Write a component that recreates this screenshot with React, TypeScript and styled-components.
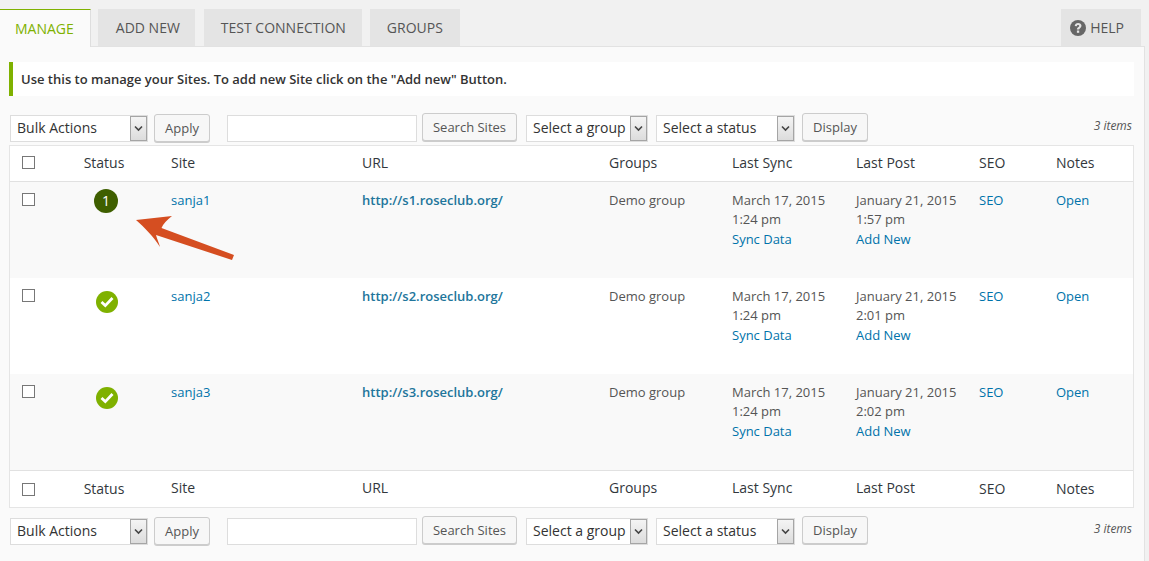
import React from "react";
import styled, { createGlobalStyle } from "styled-components";

const Global = createGlobalStyle`
  html, body { margin: 0; padding: 0; background: #f1f1f1; }
  body { font-family: "Open Sans", "Liberation Sans", sans-serif; font-size: 13px; color: #444; }
  * { box-sizing: border-box; }
`;

const Page = styled.div`
  position: relative;
  width: 1149px;
  height: 561px;
  overflow: hidden;
  padding-top: 9px;
`;

const Tabs = styled.div`
  display: flex;
  gap: 8px;
  height: 37px;
  padding-right: 8px;
  position: relative;
  z-index: 1;
`;

const Tab = styled.div<{ $active?: boolean; $pad?: number }>`
  height: ${(p) => (p.$active ? "38px" : "37px")};
  padding: 0 ${(p) => (p.$active ? "16px" : `${p.$pad ?? 17}px`)} 0 ${(p) => (p.$active ? "15px" : "17px")};
  display: flex;
  align-items: center;
  gap: 4px;
  font-size: 14px;
  text-transform: uppercase;
  background: ${(p) => (p.$active ? "#fafafa" : "#e4e4e4")};
  color: ${(p) => (p.$active ? "#7fb100" : "#555")};
  border-top: ${(p) => (p.$active ? "1px solid #7fb100" : "none")};
  border-right: ${(p) => (p.$active ? "1px solid #dedede" : "none")};
`;

const SecondTab = styled(Tab)`
  margin-left: -1px;
  margin-right: 1px;
  padding: 0 15px 0 18px;
`;

const HelpTab = styled(Tab)`
  margin-left: auto;
  padding: 0 17px 0 9px;
`;

const Panel = styled.div`
  width: 1145px;
  height: 515px;
  background: #fafafa;
  border-top: 1px solid #e2e2e2;
  border-right: 1px solid #e2e2e2;
  padding: 15px 10px 0 9px;
`;

const Notice = styled.div`
  width: 1125px;
  height: 34px;
  background: #fff;
  border-left: 4px solid #7fb100;
  padding-left: 8px;
  display: flex;
  align-items: center;
  font-size: 13px;
  font-weight: 600;
  color: #333;
`;

const Toolbar = styled.div<{ $top?: boolean }>`
  display: flex;
  align-items: flex-start;
  height: 30px;
  margin-top: ${(p) => (p.$top ? "17px" : "8px")};
  padding-left: 1px;
`;

const SelectBox = styled.div<{ $w: number; $gap: number }>`
  width: ${(p) => p.$w}px;
  margin-right: ${(p) => p.$gap}px;
  margin-top: 2px;
  height: 27px;
  background: #fff;
  border: 1px solid #ddd;
  display: flex;
  align-items: center;
  justify-content: space-between;
  padding-left: 6px;
  font-size: 14px;
  color: #333;
`;

const SelectLabel = styled.span`
  margin-bottom: 2px;
`;

const SelectArrow = styled.span`
  width: 17px;
  height: 25px;
  display: flex;
  align-items: center;
  justify-content: center;
  background: linear-gradient(#f4f4f4, #dcdcdc);
  border: 1px solid #a5a5a5;
  color: #444;
`;

const Button = styled.div<{ $w: number; $gap: number; $drop?: boolean }>`
  width: ${(p) => p.$w}px;
  margin-right: ${(p) => p.$gap}px;
  margin-top: ${(p) => (p.$drop ? "1px" : "0")};
  height: 28px;
  display: flex;
  align-items: center;
  justify-content: center;
  background: #f7f7f7;
  border: 1px solid #ccc;
  border-radius: 3px;
  box-shadow: 0 1px 0 #ccc;
  font-size: 13px;
  color: #555;
`;

const SearchInput = styled.div`
  width: 190px;
  height: 27px;
  margin-top: 2px;
  margin-right: 5px;
  background: #fff;
  border: 1px solid #ddd;
`;

const Count = styled.span`
  margin-left: auto;
  margin-top: 4px;
  padding-right: 2px;
  font-size: 12px;
  font-style: italic;
  color: #555;
`;

const Table = styled.table`
  width: 1125px;
  margin-top: 2px;
  table-layout: fixed;
  border-collapse: separate;
  border-spacing: 0;
  background: #fff;
  border: 1px solid #e5e5e5;
  font-size: 13px;
  line-height: 19.5px;
`;

const HeadCell = styled.th<{ $center?: boolean; $foot?: boolean; $raise?: boolean }>`
  height: ${(p) => (p.$foot ? "37px" : "36px")};
  padding: 0 10px ${(p) => (p.$raise ? "2px" : "0")};
  font-size: 14px;
  font-weight: 400;
  color: #32373c;
  text-align: ${(p) => (p.$center ? "center" : "left")};
  border-bottom: ${(p) => (p.$foot ? "none" : "1px solid #e1e1e1")};
  border-top: ${(p) => (p.$foot ? "1px solid #e1e1e1" : "none")};
`;

const Row = styled.tr<{ $alt?: boolean }>`
  background: ${(p) => (p.$alt ? "#f9f9f9" : "#fff")};
`;

const Cell = styled.td`
  height: 96px;
  padding: 9px 10px 0;
  vertical-align: top;
  color: #555;
`;

const StatusCell = styled(Cell)`
  padding-left: 16px;
  text-align: center;
`;

// the date lines sit a quarter pixel higher so the second line rounds up
const DateLines = styled.div`
  margin-top: -0.25px;
`;

const Link = styled.a<{ $bold?: boolean }>`
  color: ${(p) => (p.$bold ? "#21759b" : "#0073aa")};
  font-weight: ${(p) => (p.$bold ? 600 : 400)};
  text-decoration: none;
`;

const Check = styled.span<{ $body?: boolean }>`
  display: block;
  width: 13px;
  height: 13px;
  margin-left: 2px;
  margin-top: ${(p) => (p.$body ? "2px" : "0")};
  background: #fff;
  border: 1px solid #777;
`;

const StatusCircle = styled.span<{ $dark?: boolean }>`
  display: inline-flex;
  align-items: center;
  justify-content: center;
  width: ${(p) => (p.$dark ? "24px" : "22px")};
  height: ${(p) => (p.$dark ? "24px" : "22px")};
  margin-top: ${(p) => (p.$dark ? "-2px" : "4px")};
  margin-left: ${(p) => (p.$dark ? "-2px" : "0")};
  border-radius: 50%;
  background: ${(p) => (p.$dark ? "#3f5f00" : "#7fb100")};
  color: #fff;
  font-size: 14px;
`;

const ArrowMark = styled.svg`
  position: absolute;
  left: 130px;
  top: 210px;
`;

const Col = styled.col<{ $w: number }>`
  width: ${(p) => p.$w}px;
`;

const Caret = () => (
  <svg width="9" height="7" viewBox="0 0 9 7">
    <path d="M1 1.5 L4.5 5 L8 1.5" fill="none" stroke="#444" strokeWidth="1.6" />
  </svg>
);

const HelpIcon = () => (
  <svg width="16" height="16" viewBox="0 0 16 16">
    <circle cx="8" cy="8" r="8" fill="#666" />
    <path d="M4.700 5.900 C4.800 3.900 6.300 2.900 8.100 2.900 C10 2.900 11.500 4 11.500 5.700 C11.500 7.900 9.200 7.900 9.200 9.600 L6.900 9.600 C6.900 7.100 9.200 7 9.200 5.900 C9.200 5.300 8.700 4.900 8 4.900 C7.300 4.900 6.900 5.400 6.900 6.200 Z" fill="#e4e4e4" />
    <rect x="6.900" y="10.500" width="2.300" height="2.300" fill="#e4e4e4" />
  </svg>
);

const Tick = () => (
  <svg width="14" height="12" viewBox="0 0 14 12">
    <path d="M1.500 6 L5.300 9.600 L12.500 2" fill="none" stroke="#fff" strokeWidth="2.800" />
  </svg>
);

const Select = ({ label, w, gap }: { label: string; w: number; gap: number }) => (
  <SelectBox $w={w} $gap={gap}>
    <SelectLabel>{label}</SelectLabel>
    <SelectArrow><Caret /></SelectArrow>
  </SelectBox>
);

const ActionBar = ({ top }: { top?: boolean }) => (
  <Toolbar $top={top}>
    <Select label="Bulk Actions" w={138} gap={6} />
    <Button $w={56} $gap={17} $drop>Apply</Button>
    <SearchInput />
    <Button $w={95} $gap={9}>Search Sites</Button>
    <Select label="Select a group" w={122} gap={8} />
    <Select label="Select a status" w={139} gap={7} />
    <Button $w={66} $gap={0}>Display</Button>
    <Count>3 items</Count>
  </Toolbar>
);

const HeadRow = ({ foot }: { foot?: boolean }) => (
  <tr>
    <HeadCell $foot={foot} $raise={!foot}><Check /></HeadCell>
    <HeadCell $foot={foot} $raise={!foot} $center>Status</HeadCell>
    <HeadCell $foot={foot} $raise>Site</HeadCell>
    <HeadCell $foot={foot} $raise>URL</HeadCell>
    <HeadCell $foot={foot} $raise>Groups</HeadCell>
    <HeadCell $foot={foot} $raise>Last Sync</HeadCell>
    <HeadCell $foot={foot} $raise>Last Post</HeadCell>
    <HeadCell $foot={foot} $raise={!foot}>SEO</HeadCell>
    <HeadCell $foot={foot} $raise={!foot}>Notes</HeadCell>
  </tr>
);

const sites = [
  { name: "sanja1", url: "http://s1.roseclub.org/", post: "1:57 pm", pending: true },
  { name: "sanja2", url: "http://s2.roseclub.org/", post: "2:01 pm" },
  { name: "sanja3", url: "http://s3.roseclub.org/", post: "2:02 pm" },
];

export default function App() {
  return (
    <Page>
      <Global />
      <Tabs>
        <Tab $active>Manage</Tab>
        <SecondTab>Add New</SecondTab>
        <Tab $pad={16}>Test Connection</Tab>
        <Tab>Groups</Tab>
        <HelpTab><HelpIcon />Help</HelpTab>
      </Tabs>
      <Panel>
        <Notice>Use this to manage your Sites. To add new Site click on the "Add new" Button.</Notice>
        <ActionBar top />
        <Table>
          <colgroup>
            <Col $w={37} />
            <Col $w={114} />
            <Col $w={191} />
            <Col $w={247} />
            <Col $w={123} />
            <Col $w={124} />
            <Col $w={123} />
            <Col $w={77} />
            <Col $w={87} />
          </colgroup>
          <thead>
            <HeadRow />
          </thead>
          <tbody>
            {sites.map((s, i) => (
              <Row key={s.name} $alt={i % 2 === 0}>
                <Cell><Check $body /></Cell>
                <StatusCell>
                  <StatusCircle $dark={s.pending}>{s.pending ? "1" : <Tick />}</StatusCircle>
                </StatusCell>
                <Cell><Link>{s.name}</Link></Cell>
                <Cell><Link $bold>{s.url}</Link></Cell>
                <Cell>Demo group</Cell>
                <Cell>
                  <DateLines>March 17, 2015<br />1:24 pm<br /><Link>Sync Data</Link></DateLines>
                </Cell>
                <Cell>
                  <DateLines>January 21, 2015<br />{s.post}<br /><Link>Add New</Link></DateLines>
                </Cell>
                <Cell><Link>SEO</Link></Cell>
                <Cell><Link>Open</Link></Cell>
              </Row>
            ))}
          </tbody>
          <tfoot>
            <HeadRow foot />
          </tfoot>
        </Table>
        <ActionBar />
      </Panel>
      <ArrowMark width="110" height="56" viewBox="130 210 110 56">
        <path d="M136 220 L172 216 C167 220 163 224 161.500 228 L234 255 L232 260 L156 235 C157 239 159 243 160 247 C153 236 145 228 136 220 Z" fill="#d54e21" />
      </ArrowMark>
    </Page>
  );
}
